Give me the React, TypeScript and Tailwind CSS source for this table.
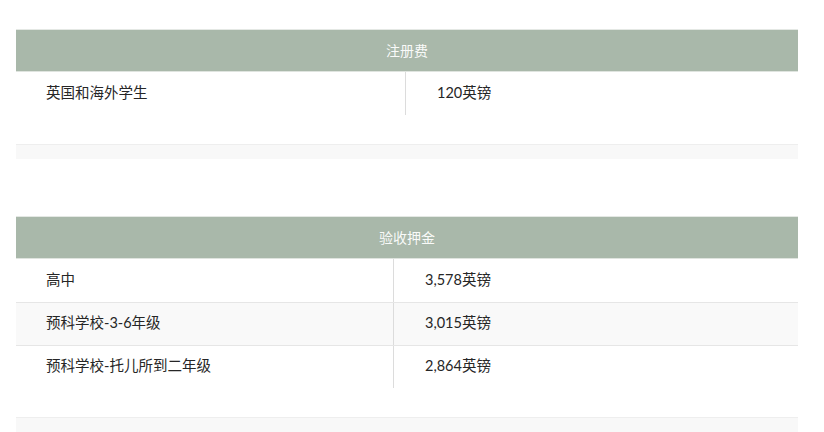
const font = { fontFamily: "Lato, 'Noto Sans CJK SC', sans-serif" };

type Row = { label: string; value: string };

const registration: Row[] = [{ label: "英国和海外学生", value: "120英镑" }];

const deposit: Row[] = [
  { label: "高中", value: "3,578英镑" },
  { label: "预科学校-3-6年级", value: "3,015英镑" },
  { label: "预科学校-托儿所到二年级", value: "2,864英镑" },
];

function FeeTable({
  title,
  rows,
  cols,
}: {
  title: string;
  rows: Row[];
  cols: string;
}) {
  return (
    <section>
      <div className="border-t border-[#e4e8e4]">
        <div className="h-[42px] flex items-center justify-center bg-[#a9b8aa] text-[14px] text-white/95 border-b border-[#dfe4df]">
          {title}
        </div>
        {rows.map((r, i) => (
          <div
            key={r.label}
            className={`grid ${cols} h-[43px] text-[14.5px] text-[#262626] ${
              i > 0 ? "border-t border-[#e6e6e6]" : ""
            } ${i % 2 === 1 ? "bg-[#f9f9f9]" : "bg-white"}`}
          >
            <div className="flex items-center pl-[30px] pb-[2px] border-r border-[#dcdcdc]">{r.label}</div>
            <div className="flex items-center pl-[31px] pb-[2px]">{r.value}</div>
          </div>
        ))}
      </div>
      {/* spacer strip under each table */}
      <div className="mt-[29px] h-[15px] bg-[#f8f8f8] border-t border-[#eeeeee]" />
    </section>
  );
}

export default function App() {
  return (
    <div className="w-[824px] h-[432px] overflow-hidden bg-white pt-[29px]" style={font}>
      <div className="ml-4 w-[782px] flex flex-col gap-[57px]">
        <FeeTable title="注册费" rows={registration} cols="grid-cols-[390px_1fr]" />
        <FeeTable title="验收押金" rows={deposit} cols="grid-cols-[378px_1fr]" />
      </div>
    </div>
  );
}
